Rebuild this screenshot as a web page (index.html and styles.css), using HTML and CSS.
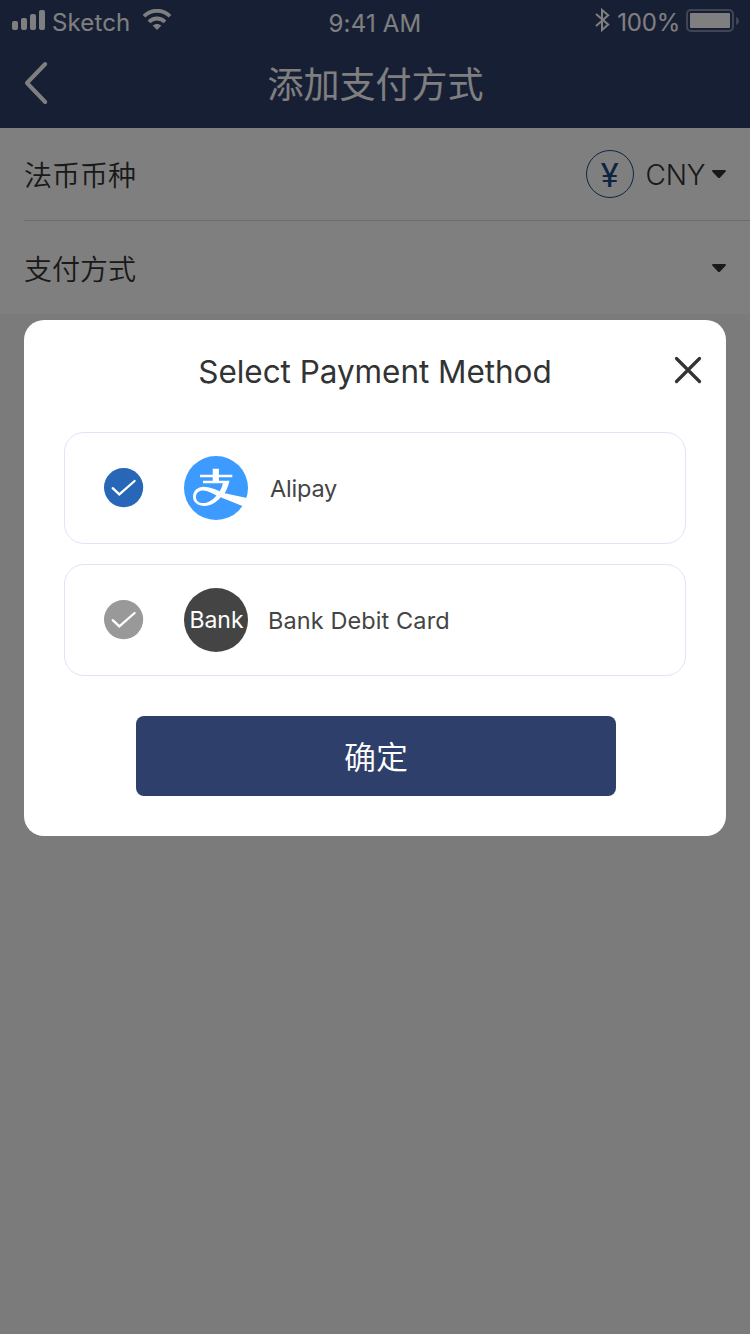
FILE: index.html
```html
<!DOCTYPE html>
<html lang="zh-CN">
<head>
<meta charset="utf-8">
<title>添加支付方式</title>
<link rel="stylesheet" href="styles.css">
</head>
<body>
<div class="screen">
  <header class="header">
    <div class="status">
      <div class="status-left">
        <svg class="signal" width="34" height="20" viewBox="0 0 34 20" fill="#fff"><rect x="0" y="11" width="6" height="9" rx="2"/><rect x="9" y="8" width="6" height="12" rx="2"/><rect x="18" y="4" width="6" height="16" rx="2"/><rect x="27" y="0" width="6" height="20" rx="2"/></svg>
        <span class="carrier">Sketch</span>
        <svg class="wifi" width="30" height="22" viewBox="0 0 30 22"><g fill="none" stroke="#fff" stroke-width="3.8"><path d="M2 7.2C9-.1 21-.1 28 7.2"/><path d="M7 12.8C11.4 8.4 18.6 8.4 23 12.8"/></g><path d="M15 21L10.6 16.6C13 14.4 17 14.4 19.400 16.600Z" fill="#fff"/></svg>
      </div>
      <span class="time">9:41 AM</span>
      <div class="status-right">
        <svg class="bluetooth" width="15" height="24" viewBox="0 0 15 24" fill="none" stroke="#fff" stroke-width="2"><path d="M1 6L13.200 16.600L7 22V2L13.200 7.300L1 18"/></svg>
        <span class="percent">100%</span>
        <svg class="battery" width="54" height="24" viewBox="0 0 54 24"><rect x="1" y="1" width="46" height="21" rx="4" fill="none" stroke="#fff" stroke-opacity=".4" stroke-width="2"/><rect x="4" y="4" width="40" height="15" rx="1" fill="#fff"/><path d="M50 8C54 9.500 54 14.500 50 16Z" fill="#fff" fill-opacity=".4"/></svg>
      </div>
    </div>
    <nav class="nav">
      <svg class="back" width="26" height="44" viewBox="0 0 26 44" fill="none" stroke="#fff" stroke-width="4" stroke-linecap="round" stroke-linejoin="round"><path d="M21.200 3L3 22L21.200 41"/></svg>
      <h1 class="title">添加支付方式</h1>
    </nav>
  </header>
  <main class="form">
    <div class="row row-currency">
      <span class="label">法币币种</span>
      <div class="value">
        <span class="coin">¥</span>
        <span class="currency">CNY</span>
        <svg class="caret" width="14" height="9" viewBox="0 0 14 9"><path d="M1 0H13Q14.500.5 13.500 1.800L8.200 7.500Q7 8.600 5.800 7.500L.5 1.800Q-.5.500 1 0Z" fill="#333"/></svg>
      </div>
    </div>
    <div class="row row-method">
      <span class="label">支付方式</span>
      <svg class="caret" width="14" height="9" viewBox="0 0 14 9"><path d="M1 0H13Q14.500.5 13.500 1.800L8.200 7.500Q7 8.600 5.800 7.500L.5 1.800Q-.5.500 1 0Z" fill="#333"/></svg>
    </div>
  </main>
  <div class="overlay">
    <section class="dialog">
      <div class="dialog-head">
        <h2 class="dialog-title">Select Payment Method</h2>
        <svg class="close" width="28" height="28" viewBox="0 0 28 28" stroke="#333" stroke-width="3.200" stroke-linecap="round"><path d="M2.500 2.500L25.500 25.500M25.500 2.500L2.500 25.500"/></svg>
      </div>
      <div class="options">
        <div class="option">
          <svg class="check" width="40" height="40" viewBox="0 0 40 40"><circle cx="19.600" cy="19.600" r="19.600" fill="#2867b8"/><path d="M8.700 20.200L15.300 26.400L30.600 13" fill="none" stroke="#fff" stroke-width="2.300" stroke-linecap="round"/></svg>
          <svg class="logo" width="64" height="64" viewBox="0 0 64 64">
            <circle cx="32" cy="32" r="32" fill="#3d9bff"/>
            <path d="M28.700 12.700H34.900V18.800H48.300V21.200H34.900V24.800H45.400C44.500 29.500 43 33.500 40.700 37.200L64 42.300L59 50.200L36.600 41.300C32.300 46.700 27 49.900 20.500 49.900C13.800 49.900 9 46.200 9 40.800C9 35 13.500 30.800 20 30.800C25.500 30.800 30.500 33 35.500 35.300C37.200 32.700 38.300 30 38.900 27.200H19V24.800H28.700V21.200H16V18.800H28.700ZM32.500 39.500C28 37.200 23.800 34.500 19.400 34.500C14.800 34.500 11.900 37.200 11.900 41C11.900 44.800 14.800 47.100 19.300 47.100C24.500 47.100 29.200 43.700 32.500 39.500Z" fill="#fff" fill-rule="evenodd"/>
          </svg>
          <span class="name name-alipay">Alipay</span>
        </div>
        <div class="option">
          <svg class="check" width="40" height="40" viewBox="0 0 40 40"><circle cx="19.600" cy="19.600" r="19.600" fill="#999"/><path d="M8.700 20.200L15.300 26.400L30.600 13" fill="none" stroke="#fff" stroke-width="2.300" stroke-linecap="round"/></svg>
          <span class="logo bank">Bank</span>
          <span class="name name-bank">Bank Debit Card</span>
        </div>
      </div>
      <button class="confirm">确定</button>
    </section>
  </div>
</div>
</body>
</html>
```

FILE: styles.css
```css
* { box-sizing: border-box; }
body {
  margin: 0;
  font-family: Inter, "Noto Sans CJK SC", sans-serif;
  color: #333;
}
svg { display: block; flex: none; }
h1, h2 { margin: 0; font-weight: 400; }
.screen {
  position: relative;
  width: 750px;
  height: 1334px;
  overflow: hidden;
  background: #f7f7f7;
}
.header { height: 128px; background: #2f3f6b; color: #fff; }
.status {
  display: grid;
  grid-template-columns: 1fr auto 1fr;
  height: 40px;
  padding: 0 12px;
  font-size: 24px;
  line-height: 30px;
}
.status-left, .status-right { display: flex; align-items: flex-start; }
.status-right { justify-content: flex-end; }
.signal { margin-top: 10px; }
.carrier { margin: 8px 0 0 6px; letter-spacing: .15px; }
.wifi { margin: 9px 0 0 12px; }
.time { margin-top: 9px; letter-spacing: .2px; }
.bluetooth { margin: 8px 7px 0 0; }
.percent { margin: 8px 6px 0 0; letter-spacing: -.2px; }
.battery { margin: 9px -2px 0 0; }
.nav {
  display: grid;
  grid-template-columns: 48px 1fr 48px;
  align-items: center;
  height: 88px;
  padding: 0 24px;
}
.back { margin-top: -2px; }
.title { padding: 2px 0 0 1px; text-align: center; font-size: 36px; line-height: 52px; }
.form { background: #fff; }
.row {
  display: flex;
  align-items: center;
  justify-content: space-between;
  height: 93px;
  margin-left: 24px;
  padding-right: 24px;
}
.row-currency { border-bottom: 1px solid #d8d8d8; }
.row-method { padding-top: 2px; }
.label { padding-top: 3px; font-size: 28px; line-height: 40px; font-weight: 350; }
.row-method .label { padding-top: 2px; }
.value { display: flex; align-items: center; }
.coin {
  width: 48px;
  height: 48px;
  border: 1px solid #194a86;
  border-radius: 50%;
  color: #194a86;
  font: 400 34px/48px Roboto, sans-serif;
  text-align: center;
}
.currency { margin: 1px 7px 0 12px; font-size: 28px; font-weight: 300; letter-spacing: -.3px; }
.overlay { position: absolute; inset: 0; padding: 320px 24px 0; background: rgba(0, 0, 0, .5); }
.dialog { height: 516px; padding: 0 40px; background: #fff; border-radius: 20px; }
.dialog-head {
  display: grid;
  grid-template-columns: 1fr auto 1fr;
  align-items: center;
  height: 112px;
  margin-right: -16px;
  margin-left: -16px;
  padding-bottom: 12px;
}
.dialog-title {
  grid-column: 2;
  padding-top: 3px;
  font-size: 31.500px;
  line-height: 41px;
  letter-spacing: -.05px;
}
.close { justify-self: end; }
.options { display: grid; gap: 20px; }
.option {
  display: flex;
  align-items: center;
  height: 112px;
  padding-left: 39px;
  border: 1px solid #e0e4f6;
  border-radius: 20px;
}
.logo { flex: none; width: 64px; height: 64px; margin-left: 40px; }
.bank {
  padding-left: 1px;
  border-radius: 50%;
  background: #444;
  color: #fff;
  font-size: 23px;
  font-weight: 400;
  line-height: 64px;
  text-align: center;
}
.name { font-size: 23.500px; color: #444; }
.name-alipay { margin-left: 22px; letter-spacing: -.2px; }
.name-bank { margin-left: 20px; letter-spacing: .1px; }
.confirm {
  display: block;
  width: 480px;
  height: 80px;
  margin: 40px 0 0 72px;
  padding: 4px 0 0;
  border: 0;
  border-radius: 8px;
  background: #2f3f6b;
  color: #fff;
  font: 350 32px/76px Inter, "Noto Sans CJK SC", sans-serif;
}
```
